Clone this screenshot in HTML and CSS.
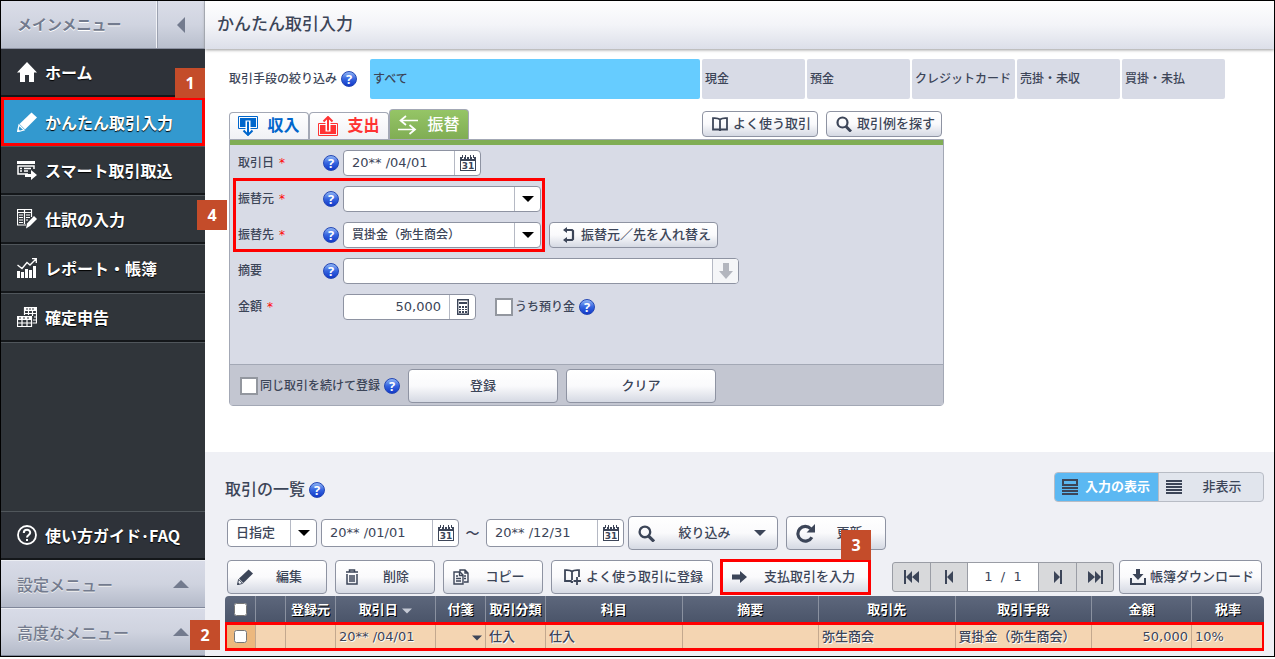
FILE: index.html
```html
<!DOCTYPE html>
<html lang="ja">

<head>
    <meta charset="UTF-8">
    <meta name="viewport" content="width=device-width, initial-scale=1.0">
    <title>かんたん取引入力</title>
    <link rel="stylesheet" href="styles.css">
</head>

<body>
    <svg class="sprite" aria-hidden="true">
        <symbol id="calendar" viewBox="0 0 16 16">
            <path d="M0 2h2v2h2V2h2v2h1V2h2v2h1V2h2v2h2V2h2v14H0z M1 6v9h14V6z" fill="currentColor" fill-rule="evenodd" />
            <path d="M2.500 0v3M5.500 0v3M10.500 0v3M13.500 0v3" stroke="currentColor" />
            <text x="8" y="14" text-anchor="middle" font-size="9" font-weight="700" fill="currentColor">31</text>
        </symbol>
        <symbol id="down" viewBox="0 0 12 6">
            <path d="M0 0h12L6 6z" fill="currentColor" />
        </symbol>
        <symbol id="search" viewBox="0 0 16 16">
            <circle cx="6.500" cy="6.500" r="5" fill="none" stroke="currentColor" stroke-width="2.200" />
            <path d="M10 10.500l5 5" stroke="currentColor" stroke-width="3" />
        </symbol>
        <symbol id="pencil" viewBox="0 0 20 20">
            <path d="M14.500 0.500L20 5.500L8 17.500L2.500 12z" fill="currentColor" />
            <path d="M2 13L7 18L0.500 19.800z" fill="none" stroke="currentColor" stroke-width="1.200" />
            <path d="M1.500 17l1.500 1.500L0.500 19.800z" fill="currentColor" />
        </symbol>
        <symbol id="prev" viewBox="0 0 8 14">
            <path d="M0 0h2v14H0zM8 1v12L2 7z" fill="currentColor" />
        </symbol>
        <symbol id="first" viewBox="0 0 15 14">
            <path d="M0 0h2v14H0zM8 1v12L2 7zM15 1v12L8 7z" fill="currentColor" />
        </symbol>
    </svg>

    <aside class="sidebar">
        <div class="side-head">
            <div class="side-title">メインメニュー</div>
            <button class="fold" aria-label="閉じる">
                <svg width="8" height="16" viewBox="0 0 8 16"><path d="M8 0v16L0 8z" fill="currentColor" /></svg>
            </button>
        </div>
        <nav class="menu">
            <a href="#" class="item home">
                <svg width="20" height="20" viewBox="0 0 20 20"><path d="M10 0L20 10.500H17V20H12V13H8v7H3V10.500H0z" fill="currentColor" /></svg>
                ホーム
            </a>
            <a href="#" class="item active">
                <svg width="20" height="20"><use href="#pencil" /></svg>
                かんたん取引入力
                <span class="badge b1">1</span>
            </a>
            <a href="#" class="item">
                <svg width="20" height="20" viewBox="0 0 20 20">
                    <path d="M0 1h18v3H0z" fill="currentColor" />
                    <path d="M11 14H1V6h16v3M3 8.500h2M7 8.500h7M3 11h2M7 11h4" fill="none" stroke="currentColor" stroke-width="1.500" />
                    <path d="M8 14h6v-4l6 5-6 5v-3H8z" fill="currentColor" />
                </svg>
                スマート取引取込
            </a>
            <a href="#" class="item">
                <svg width="20" height="20" viewBox="0 0 20 20">
                    <path d="M9 16H0.500V0.500h14V8M7.500 0v15M0 3.500h15M2 6h4M2 8.500h4M2 11h4M2 13.500h4M9 6h4M9 8.500h4M9 11h2" fill="none" stroke="currentColor" stroke-width="1.200" />
                    <path d="M17 7l3 3-7 7-4 2.500 1-5z" fill="currentColor" />
                </svg>
                仕訳の入力
            </a>
            <a href="#" class="item">
                <svg width="20" height="20" viewBox="0 0 20 20">
                    <path d="M0 13h3v7H0zM4 14h3v6H4zM8 11h3v9H8zM12 12h3v8h-3zM16 8h3v12h-3z" fill="currentColor" />
                    <path d="M0.500 7L5 10.500L10 4.500L13 7L19 1M15 0.700h4.300V5" fill="none" stroke="currentColor" stroke-width="1.300" />
                </svg>
                レポート・帳簿
            </a>
            <a href="#" class="item">
                <svg width="20" height="20" viewBox="0 0 20 20">
                    <path d="M7 0h13v4H7zM0 9h15v4H0z" fill="currentColor" />
                    <path d="M7.500 8V1h12v15h-4M8 6.500h11M11.500 4v4M15.500 4v5M17 10h2.500M16 13h3M0.500 10v9.500h14V10M0 16h15M5 13v6M10 13v6" fill="none" stroke="currentColor" stroke-width="1.200" />
                    <path d="M9 2h2M12 2h2M15 2h2M2 11h2M6 11h2M10 11h2" stroke="#30353a" />
                </svg>
                確定申告
            </a>
        </nav>
        <nav class="menu-bottom">
            <a href="#" class="item faq">
                <svg width="20" height="20" viewBox="0 0 20 20">
                    <circle cx="10" cy="10" r="9" fill="none" stroke="currentColor" stroke-width="1.800" />
                    <path d="M6.800 8C6.800 3.800 13.200 3.800 13.200 7.800C13.200 10 10 10 10 12.500" fill="none" stroke="currentColor" stroke-width="2" />
                    <path d="M9 14h2v2H9z" fill="currentColor" />
                </svg>
                <span>使い方ガイド･FAQ</span>
            </a>
            <button class="sub">設定メニュー
                <svg width="16" height="8" viewBox="0 0 16 8"><path d="M8 0l8 8H0z" fill="currentColor" /></svg>
            </button>
            <button class="sub">高度なメニュー
                <svg width="16" height="8" viewBox="0 0 16 8"><path d="M8 0l8 8H0z" fill="currentColor" /></svg>
            </button>
        </nav>
    </aside>

    <main class="main">
        <h1 class="page-title">かんたん取引入力</h1>

        <section class="entry">
            <div class="filter">
                <span>取引手段の絞り込み</span>
                <a href="#" class="help">?</a>
                <div class="kinds">
                    <button class="kind all">すべて</button>
                    <button class="kind">現金</button>
                    <button class="kind">預金</button>
                    <button class="kind">クレジットカード</button>
                    <button class="kind">売掛・未収</button>
                    <button class="kind">買掛・未払</button>
                </div>
            </div>

            <div class="tabs">
                <button class="tab income">
                    <svg width="20" height="20" viewBox="0 0 20 20">
                        <path d="M0.500 0.500h19v12h-19z" fill="none" stroke="currentColor" />
                        <path d="M2 2h16v9H2z" fill="currentColor" />
                        <path d="M10 4.500V20" stroke="#fff" stroke-width="5" />
                        <path d="M10 5.500v13M5.500 14.500L10 19l4.500-4.500" fill="none" stroke="currentColor" stroke-width="2" />
                    </svg>
                    収入
                </button>
                <button class="tab outgo">
                    <svg width="20" height="20" viewBox="0 0 20 20">
                        <path d="M0.500 7.500h19v12h-19z" fill="none" stroke="currentColor" />
                        <path d="M2 9h16v9H2z" fill="currentColor" />
                        <path d="M10 0V15.500" stroke="#fff" stroke-width="5" />
                        <path d="M10 14.500V1.500M5.500 5.500L10 1l4.500 4.500" fill="none" stroke="currentColor" stroke-width="2" />
                    </svg>
                    支出
                </button>
                <button class="tab transfer">
                    <svg width="20" height="20" viewBox="0 0 20 20"><path d="M20 5.500H2.500M8 1L2.500 5.500L8 10M0 14.500h17M11.500 10l5.500 4.500-5.500 4.500" fill="none" stroke="currentColor" stroke-width="1.700" /></svg>
                    振替
                </button>
                <div class="tab-buttons">
                    <button class="btn">
                        <svg width="16" height="14" viewBox="0 0 16 14"><path d="M8 2.500C6 1 3.500 1 1 1.200V12.500H7L8 13.500L9 12.500H15V1.200C12.500 1 10 1 8 2.500zM8 2.500V12" fill="none" stroke="currentColor" stroke-width="1.800" /></svg>
                        よく使う取引
                    </button>
                    <button class="btn">
                        <svg width="16" height="16"><use href="#search" /></svg>
                        取引例を探す
                    </button>
                </div>
            </div>

            <form class="panel">
                <div class="rows">
                    <div class="row">
                        <label for="date">取引日<i>*</i></label>
                        <a href="#" class="help">?</a>
                        <div class="field date">
                            <input id="date" type="text" value="20** /04/01">
                            <button type="button" class="end" aria-label="カレンダー"><svg width="16" height="16"><use href="#calendar" /></svg></button>
                        </div>
                    </div>
                    <div class="pair">
                        <div class="group">
                            <div class="row">
                                <label for="from">振替元<i>*</i></label>
                                <a href="#" class="help">?</a>
                                <div class="field combo">
                                    <select id="from"><option></option></select>
                                    <span class="end"><svg width="12" height="6"><use href="#down" /></svg></span>
                                </div>
                            </div>
                            <div class="row">
                                <label for="to">振替先<i>*</i></label>
                                <a href="#" class="help">?</a>
                                <div class="field combo">
                                    <select id="to"><option>買掛金（弥生商会）</option></select>
                                    <span class="end"><svg width="12" height="6"><use href="#down" /></svg></span>
                                </div>
                            </div>
                            <div class="mark"></div>
                            <span class="badge b4">4</span>
                        </div>
                        <button type="button" class="btn swap">
                            <svg width="12" height="16" viewBox="0 0 12 16"><path d="M3 3h6l1 1v8l-1 1H3" fill="none" stroke="currentColor" stroke-width="2.200" /><path d="M0 3l4-3v6zM0 13l4-3v6z" fill="currentColor" /></svg>
                            振替元／先を入れ替え
                        </button>
                    </div>
                    <div class="row">
                        <label for="memo">摘要</label>
                        <a href="#" class="help">?</a>
                        <div class="field memo">
                            <input id="memo" type="text">
                            <button type="button" class="end pale" aria-label="候補"><svg width="14" height="16" viewBox="0 0 14 16"><path d="M4 0h6v8h4l-7 8-7-8h4z" fill="currentColor" /></svg></button>
                        </div>
                    </div>
                    <div class="row">
                        <label for="amount">金額<i>*</i></label>
                        <span class="help-space"></span>
                        <div class="field amount">
                            <input id="amount" type="text" value="50,000">
                            <button type="button" class="end" aria-label="電卓">
                                <svg width="12" height="16" viewBox="0 0 12 16"><path d="M0.700 0.700h10.600v14.600H0.700z" fill="none" stroke="currentColor" stroke-width="1.400" /><path d="M2 3h8v2H2zM2 7h2v2H2zM5 7h2v2H5zM8 7h2v2H8zM2 10h2v1H2zM5 10h2v1H5zM8 10h2v1H8zM2 12h2v2H2zM5 12h2v2H5zM8 12h2v2H8z" fill="currentColor" /></svg>
                            </button>
                        </div>
                        <input id="deposit" type="checkbox" class="check">
                        <label for="deposit" class="check-label">うち預り金</label>
                        <a href="#" class="help">?</a>
                    </div>
                </div>
                <div class="panel-foot">
                    <input id="again" type="checkbox" class="check">
                    <label for="again" class="check-label">同じ取引を続けて登録</label>
                    <a href="#" class="help">?</a>
                    <button type="button" class="btn wide">登録</button>
                    <button type="button" class="btn wide">クリア</button>
                </div>
            </form>
        </section>

        <section class="list">
            <div class="list-head">
                <div class="list-title">
                    <h2>取引の一覧</h2>
                    <a href="#" class="help">?</a>
                </div>
                <div class="toggle">
                    <button class="on">
                        <svg width="16" height="16" viewBox="0 0 16 16"><path d="M1 1h14v5H1z" fill="none" stroke="#3c4558" stroke-width="2" /><path d="M0 8h16v2H0zM0 11h16v2H0zM0 14h16v2H0z" fill="#3c4558" /></svg>
                        <span>入力の表示</span>
                    </button>
                    <button>
                        <svg width="16" height="14" viewBox="0 0 16 14"><path d="M0 0h16v2H0zM0 3h16v2H0zM0 6h16v2H0zM0 9h16v2H0zM0 12h16v2H0z" fill="currentColor" /></svg>
                        <span>非表示</span>
                    </button>
                </div>
            </div>

            <div class="search">
                <div class="field period">
                    <select aria-label="期間"><option>日指定</option></select>
                    <span class="end"><svg width="12" height="6"><use href="#down" /></svg></span>
                </div>
                <div class="field date">
                    <input type="text" value="20** /01/01" aria-label="開始日">
                    <button class="end" aria-label="カレンダー"><svg width="16" height="16"><use href="#calendar" /></svg></button>
                </div>
                <span class="tilde">～</span>
                <div class="field date">
                    <input type="text" value="20** /12/31" aria-label="終了日">
                    <button class="end" aria-label="カレンダー"><svg width="16" height="16"><use href="#calendar" /></svg></button>
                </div>
                <button class="btn narrow-down">
                    <svg width="17" height="17"><use href="#search" /></svg>
                    <span>絞り込み</span>
                    <svg width="12" height="6"><use href="#down" /></svg>
                </button>
                <button class="btn tool">
                    <svg width="19" height="19" viewBox="0 0 18 18"><path d="M15 12.500A7 7 0 1 1 14 4.500" fill="none" stroke="currentColor" stroke-width="3" /><path d="M18 0v8h-8z" fill="currentColor" /></svg>
                    <span>更新</span>
                </button>
            </div>

            <div class="tools">
                <button class="btn tool">
                    <svg width="16" height="16"><use href="#pencil" /></svg>
                    <span>編集</span>
                </button>
                <button class="btn tool">
                    <svg width="14" height="16" viewBox="0 0 14 16"><path d="M1 3h12M4.500 3V1h5v2M2 5v10h10V5M5 6v7M7 6v7M9 6v7" fill="none" stroke="currentColor" stroke-width="1.500" /></svg>
                    <span>削除</span>
                </button>
                <button class="btn tool">
                    <svg width="16" height="16" viewBox="0 0 16 16"><path d="M7 3V1h5l3 3v9h-4M12 1v3h3M1 3h6l3 3v9H1zM6.500 3v3.500H10M3 7h2M3 9.500h5M3 12h5M11 7h2M11 9.500h2" fill="none" stroke="currentColor" stroke-width="1.400" /></svg>
                    <span>コピー</span>
                </button>
                <button class="btn often">
                    <svg width="17" height="16" viewBox="0 0 17 16"><path d="M9 13H7.500L7 12H1V1.200C4 1 6.500 1 8 2.500C9.500 1 12 1 15 1.200V8M8 2.500V11M13 8v8M9.500 12H17" fill="none" stroke="currentColor" stroke-width="1.800" /></svg>
                    よく使う取引に登録
                </button>
                <div class="pay">
                    <button class="btn">
                        <svg width="15" height="12" viewBox="0 0 15 12"><path d="M0 3.500h8V0l7 6-7 6V8.500H0z" fill="currentColor" /></svg>
                        <span>支払取引を入力</span>
                    </button>
                    <span class="badge b3">3</span>
                </div>
                <div class="pager">
                    <button aria-label="最初"><svg width="15" height="14"><use href="#first" /></svg></button>
                    <button aria-label="前"><svg width="8" height="14"><use href="#prev" /></svg></button>
                    <span class="page">1 &nbsp;/ &nbsp;1</span>
                    <button aria-label="次"><svg class="flip" width="8" height="14"><use href="#prev" /></svg></button>
                    <button aria-label="最後"><svg class="flip" width="15" height="14"><use href="#first" /></svg></button>
                </div>
                <button class="btn download">
                    <svg width="16" height="16" viewBox="0 0 16 16"><path d="M6 0h4v5h3.500L8 11 2.500 5H6zM0 9h2v5h12V9h2v7H0z" fill="currentColor" /></svg>
                    帳簿ダウンロード
                </button>
            </div>

            <div class="table-box">
                <table>
                    <colgroup>
                        <col class="c31"><col class="c30"><col class="c50"><col class="c100"><col class="c50"><col class="c60">
                        <col><col><col><col>
                        <col class="c100"><col class="c72">
                    </colgroup>
                    <thead>
                        <tr>
                            <th><input type="checkbox" aria-label="すべて選択"></th>
                            <th></th>
                            <th>登録元</th>
                            <th>取引日 <svg class="sort" width="10" height="6"><use href="#down" /></svg></th>
                            <th>付箋</th>
                            <th>取引分類</th>
                            <th>科目</th>
                            <th>摘要</th>
                            <th>取引先</th>
                            <th>取引手段</th>
                            <th>金額</th>
                            <th>税率</th>
                        </tr>
                    </thead>
                    <tbody>
                        <tr>
                            <td class="sel"><input type="checkbox" aria-label="選択"></td>
                            <td></td>
                            <td></td>
                            <td>20** /04/01</td>
                            <td class="right"><svg width="10" height="6"><use href="#down" /></svg></td>
                            <td>仕入</td>
                            <td>仕入</td>
                            <td></td>
                            <td>弥生商会</td>
                            <td>買掛金（弥生商会）</td>
                            <td class="right">50,000</td>
                            <td>10%</td>
                        </tr>
                    </tbody>
                </table>
                <span class="badge b2">2</span>
            </div>
        </section>
    </main>
</body>

</html>
```
FILE: styles.css
```css
* {
    box-sizing: border-box;
}

html {
    background-color: #fff;
}

body {
    margin: 0;
    display: flex;
    min-height: calc(100vh - 2px);
    border: 1px solid #000;
    color: #3c4558;
    font-family: "DejaVu Sans", "Noto Sans CJK JP", sans-serif;
    font-size: 12px;
    font-weight: 500;
    line-height: 18px;
}

button,
input,
select {
    margin: 0;
    padding: 0;
    border: 0;
    background: none;
    color: inherit;
    font: inherit;
    outline: none;
}

button {
    cursor: pointer;
    white-space: nowrap;
}

svg {
    flex: none;
}

.sprite {
    display: none;
}

/* left menu */
.sidebar {
    width: 204px;
    flex: none;
    display: flex;
    flex-direction: column;
    background-color: #30353a;
    font-family: "Noto Sans CJK JP", sans-serif;
}

.side-head {
    display: flex;
    height: 48px;
    border-bottom: 1px solid #8b90a0;
    background: linear-gradient(#dadde8, #d0d4e0 50%, #b9bfcd);
    color: #737b8e;
}

.side-title {
    flex: 1;
    padding-left: 16px;
    border-right: 1px solid #f2f3f7;
    font-size: 15px;
    font-weight: 700;
    line-height: 46px;
    text-shadow: 0 1px 0 #fff;
}

.fold {
    display: flex;
    align-items: center;
    justify-content: center;
    width: 48px;
    border-left: 1px solid #9ca2b1;
    border-right: 1px solid #aab0bd;
}

.item {
    position: relative;
    display: flex;
    align-items: center;
    gap: 8px;
    height: 49px;
    padding-left: 16px;
    border-top: 1px solid #50565b;
    border-bottom: 2px solid #14171a;
    color: #fff;
    font-size: 16px;
    font-weight: 700;
    text-decoration: none;
    text-shadow: 0 1px 1px #000;
}

.home,
.faq {
    background-color: #2e3239;
}

.home {
    height: 48px;
    border-top: 0;
}

.active {
    background-color: #3399cf;
    border: 0;
    outline: 3px solid #f00;
    outline-offset: -3px;
}

.menu .item:last-child {
    box-shadow: 0 1px 0 #50565b;
}

.menu-bottom {
    margin-top: auto;
}

.sub {
    display: flex;
    align-items: center;
    justify-content: space-between;
    width: 100%;
    height: 48px;
    padding: 0 16px;
    border-top: 1px solid #eceef3;
    border-bottom: 1px solid #80879a;
    background: linear-gradient(#d8dbe7, #cfd3df 50%, #b4bac9);
    color: #737b8e;
    font-size: 16px;
    text-shadow: 0 1px 0 #eee;
}

/* numbered guides */
.badge {
    position: absolute;
    z-index: 2;
    width: 30px;
    height: 30px;
    background-color: #c44c2a;
    color: #fff;
    font-family: "Open Sans", sans-serif;
    font-size: 16px;
    font-weight: 700;
    line-height: 30px;
    text-align: center;
    text-shadow: none;
}

.b1 {
    top: -29px;
    right: 0;
}

.b2 {
    top: 24px;
    left: -35px;
}

.b3 {
    top: -30px;
    right: -1px;
}

.b4 {
    top: 14px;
    left: -41px;
}

.mark {
    position: absolute;
    top: -8px;
    right: -4px;
    bottom: -4px;
    left: -5px;
    border: 3px solid #f00;
    pointer-events: none;
}

/* right side */
.main {
    flex: 1;
    min-width: 0;
    display: flex;
    flex-direction: column;
}

.page-title {
    margin: 0;
    padding-left: 12px;
    height: 48px;
    background: linear-gradient(#fefefe, #f3f4f8 50%, #dcdfe9);
    box-shadow: 0 1px 3px #999;
    font-size: 17px;
    font-weight: 500;
    line-height: 46px;
}

.entry {
    flex: 1;
    padding: 10px 24px 16px 24px;
}

.help {
    flex: none;
    width: 16px;
    height: 16px;
    border: 1px solid #2447b5;
    border-radius: 50%;
    background: linear-gradient(#8fb4f5, #3565e0 50%, #1238c8);
    color: #fff;
    font-family: "Open Sans", sans-serif;
    font-size: 13px;
    font-weight: 700;
    line-height: 14px;
    text-align: center;
    text-decoration: none;
}

.filter {
    display: flex;
    align-items: center;
    gap: 4px;
}

.filter span {
    white-space: nowrap;
}

.kinds {
    display: flex;
    flex: 1;
    gap: 2px;
    max-width: 855px;
    margin-left: 9px;
}

.kind {
    flex: 1;
    min-width: 0;
    height: 40px;
    padding-left: 3px;
    border-radius: 2px;
    background-color: #d8dbe6;
    text-align: left;
}

.all {
    flex: 0 1 330px;
    background-color: #66ccff;
}

.tabs {
    display: flex;
    align-items: flex-end;
    max-width: 715px;
    height: 30px;
    margin-top: 10px;
}

.tab {
    display: flex;
    align-items: center;
    justify-content: center;
    gap: 9px;
    width: 80px;
    height: 27px;
    border: 1px solid #a3a8b5;
    border-bottom: 0;
    border-radius: 4px 4px 0 0;
    background: linear-gradient(#fff, #f0f1f5);
    font-size: 16px;
    font-weight: 700;
}

.income {
    color: #0066cc;
}

.outgo {
    color: #ff3333;
}

.transfer {
    height: 30px;
    background: linear-gradient(#95c566, #80ad54);
    color: #fff;
    font-weight: 500;
}

.tab-buttons {
    display: flex;
    gap: 8px;
    align-self: flex-start;
    margin: 2px 2px 0 auto;
}

.btn {
    display: flex;
    align-items: center;
    justify-content: center;
    gap: 5px;
    height: 26px;
    padding: 0 6px 0 9px;
    border: 1px solid #8e93a2;
    border-radius: 4px;
    background: linear-gradient(#fff, #fafafc 50%, #d5d9e3);
    font-size: 13px;
}

.panel {
    max-width: 715px;
    border: 1px solid #a3a8b5;
    border-radius: 0 0 4px 4px;
    background-color: #d8dbe6;
}

.rows {
    display: flex;
    flex-direction: column;
    gap: 10px;
    padding: 5px 8px 44px;
    border-top: 5px solid #80ad54;
}

.row {
    display: flex;
    align-items: center;
    gap: 4px;
}

.row label {
    width: 81px;
}

.row i {
    margin-left: 5px;
    color: #f00;
    font-style: normal;
}

.help-space {
    width: 16px;
}

.pair {
    display: flex;
    align-items: flex-end;
    gap: 8px;
}

.group {
    position: relative;
    display: flex;
    flex-direction: column;
    gap: 10px;
}

.field {
    display: flex;
    height: 26px;
    border: 1px solid #8e93a2;
    border-radius: 4px;
    background-color: #fff;
    overflow: hidden;
}

.field input,
.field select {
    flex: 1;
    min-width: 0;
    padding-left: 8px;
    font-size: 13px;
    appearance: none;
}

.end {
    display: flex;
    align-items: center;
    justify-content: center;
    width: 26px;
    border-left: 1px solid #b5b9c4;
}

.field span.end {
    color: #000;
}

.date {
    width: 138px;
}

.combo {
    width: 198px;
}

.combo select {
    font-size: 12px;
}

.memo {
    width: 396px;
}

.pale {
    background-color: #f5f6f8;
    color: #b3b6be;
}

.amount {
    width: 133px;
    margin-right: 15px;
}

.amount input {
    padding-right: 8px;
    text-align: right;
}

.swap {
    gap: 6px;
    padding-left: 13px;
}

.check {
    flex: none;
    width: 18px;
    height: 18px;
    border: 2px solid #93979f;
    background-color: #fff;
    appearance: none;
}

.check:checked {
    background-color: #3399cf;
}

.row .check-label {
    width: auto;
    margin-left: -2px;
}

.panel-foot {
    display: flex;
    align-items: center;
    gap: 4px;
    padding: 4px 10px 2px;
    border-top: 1px solid #a3a8b5;
    background-color: #c3c6d1;
}

.panel-foot .check-label {
    margin-left: -2px;
}

.wide {
    width: 150px;
    height: 34px;
    padding: 0;
    margin: 0 0 0 4px;
}

/* transaction list */
.list {
    padding: 20px 10px 4px 20px;
    background-color: #eff0f5;
}

.list-head {
    display: flex;
    align-items: center;
    height: 30px;
}

.list-title {
    display: flex;
    align-items: center;
    gap: 4px;
    padding-top: 5px;
}

.list-title h2 {
    margin: 0;
    font-size: 16px;
    font-weight: 500;
}

.toggle {
    display: flex;
    margin-left: auto;
    border: 1px solid #b8bcc5;
    border-radius: 4px;
    background-color: #e1e5ed;
    overflow: hidden;
}

.toggle button {
    display: flex;
    align-items: center;
    width: 104px;
    height: 28px;
    padding: 0 7px;
    font-size: 13px;
}

.toggle button span {
    flex: 1;
    margin-left: 6px;
    text-align: center;
}

.toggle .on {
    background-color: #5bb8f2;
    color: #fff;
    font-weight: 700;
    border-right: 1px solid #b8bcc5;
}

.search {
    display: flex;
    align-items: center;
    gap: 4px;
    margin-top: 14px;
    padding-left: 2px;
}

.search .field {
    height: 28px;
}

.period {
    width: 90px;
}

.tilde {
    width: 19px;
    font-size: 14px;
    text-align: center;
}

.search .btn,
.tools .btn {
    height: 34px;
}

.search .narrow-down {
    width: 150px;
    padding: 0 11px 0 9px;
    justify-content: space-between;
    margin-right: 4px;
}

.btn.tool {
    width: 100px;
}

.btn.tool span {
    flex: 1;
    text-align: center;
}

.tools {
    display: flex;
    align-items: center;
    gap: 8px;
    margin-top: 10px;
    padding: 0 2px;
}

.often {
    width: 162px;
}

.pay {
    position: relative;
}

.pay .btn {
    width: 149px;
    padding: 0 14px 0 10px;
    justify-content: space-between;
    border-radius: 0;
    outline: 3px solid #f00;
    outline-offset: -2px;
}

.pager {
    display: flex;
    height: 30px;
    margin-left: auto;
    border: 1px solid #9a9da5;
    border-radius: 3px;
    background-color: #d8d9db;
    overflow: hidden;
}

.pager button {
    display: flex;
    align-items: center;
    justify-content: center;
    width: 37px;
}

.pager button + button {
    border-left: 1px solid #9a9da5;
}

.page {
    width: 72px;
    border: 1px solid #9a9da5;
    border-width: 0 1px;
    background-color: #fff;
    font-size: 13px;
    line-height: 28px;
    text-align: center;
}

.flip {
    transform: scaleX(-1);
}

.tools .download {
    width: 143px;
    margin-left: -3px;
    gap: 4px;
}

.table-box {
    position: relative;
    margin-top: 2px;
}

table {
    width: 100%;
    border-collapse: separate;
    border-spacing: 0;
    table-layout: fixed;
    border-radius: 4px 4px 0 0;
    font-size: 13px;
    overflow: hidden;
    padding-bottom: 2px;
}

.c31 {
    width: 31px;
}

.c30 {
    width: 30px;
}

.c50 {
    width: 50px;
}

.c60 {
    width: 60px;
}

.c72 {
    width: 72px;
}

.c100 {
    width: 100px;
}

th,
td {
    height: 27px;
    padding: 0 3px;
    white-space: nowrap;
}

th {
    border-right: 1px solid #8a91a0;
    background: linear-gradient(#5d677c, #4a5469);
    color: #fff;
    font-weight: 700;
    text-shadow: 1px 1px 0 #000;
}

td {
    border-right: 1px solid #c3a88e;
    background-color: #f4d5b2;
    text-shadow: 1px 1px 0 #fff;
}

th:last-child,
td:last-child {
    border-right: 0;
}

tbody tr {
    outline: 3px solid #f00;
    outline-offset: -2px;
}

th input,
td input {
    display: block;
    width: 13px;
    height: 13px;
    margin: 0 auto;
}

.sel {
    background-color: #ecb87e;
}

.sort {
    color: #c5cad5;
}

.right {
    text-align: right;
}
```
